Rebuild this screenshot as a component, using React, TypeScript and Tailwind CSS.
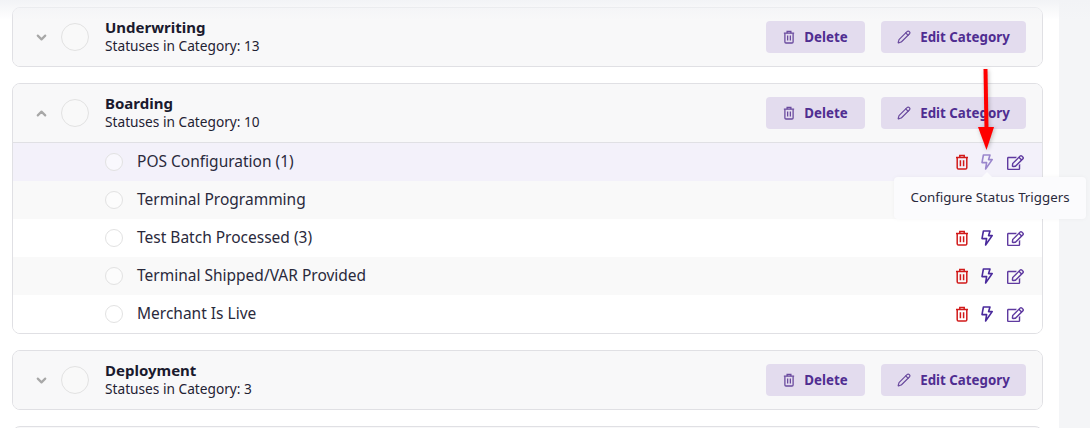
import React from "react";
import { ChevronDown, ChevronUp, Pencil } from "lucide-react";
import { FaRegEdit } from "react-icons/fa";

const statuses = [
  { name: "POS Configuration (1)", bg: "bg-[#f3f1fa]", faded: true },
  { name: "Terminal Programming", bg: "bg-[#f9f9f9]", hidden: true },
  { name: "Test Batch Processed (3)", bg: "bg-white" },
  { name: "Terminal Shipped/VAR Provided", bg: "bg-[#f9f9f9]" },
  { name: "Merchant Is Live", bg: "bg-white" },
];

function TrashIcon({ className }: { className?: string }) {
  return (
    <svg viewBox="0 0 14 16" fill="none" stroke="currentColor" strokeWidth="1.5" className={className}>
      <path d="M1 3.5h12" />
      <path d="M4.8 3.5V1.6h4.4v1.9" />
      <path d="M2.2 3.5v10.2c0 .8.5 1.3 1.3 1.3h7c.8 0 1.3-.5 1.3-1.3V3.5" />
      <path d="M5.4 6.2v6M8.6 6.2v6" />
    </svg>
  );
}

function BoltIcon({ className }: { className?: string }) {
  return (
    <svg viewBox="0 0 12 16" fill="none" stroke="currentColor" strokeWidth="1.6" strokeLinejoin="round" className={className}>
      <path d="M2.4 1h6.6L7.6 5.6h3.6L4.6 15l1-6.4H1z" />
    </svg>
  );
}

function CategoryHeader({ title, count, open }: { title: string; count: number; open?: boolean }) {
  const Chevron = open ? ChevronUp : ChevronDown;
  return (
    <div className="h-[58px] flex items-center bg-[#f8f8f9] pl-[21px] pr-4">
      <Chevron size={15} strokeWidth={3.5} className="text-[#a8a8a8]" />
      <div className="ml-3 w-7 h-7 rounded-full border border-[#e2e2e2] bg-[#f9f9f9]" />
      <div className="ml-4 flex-1 pb-[2px]">
        <p className="text-[15px] leading-[19px] font-bold text-[#1a1a2e]">{title}</p>
        <p className="text-[13.7px] leading-[18px] text-[#1f2233]">Statuses in Category: {count}</p>
      </div>
      <button className="h-8 w-[99px] flex items-center justify-center gap-[9px] rounded bg-[#e3dcee] text-[13.3px] font-bold text-[#4f2d91]">
        <TrashIcon className="w-3 h-[14px] text-[#6a4a9e]" />
        <span className="pt-[2px]">Delete</span>
      </button>
      <button className="ml-4 h-8 w-[145px] flex items-center justify-center gap-[9px] rounded bg-[#e3dcee] text-[13.3px] font-bold text-[#4f2d91]">
        <Pencil size={14} className="text-[#6a4a9e]" />
        <span className="pt-[2px]">Edit Category</span>
      </button>
    </div>
  );
}

export default function App() {
  return (
    <div className="relative h-[428px] overflow-hidden bg-[#f4f5f7] font-['Noto_Sans','Liberation_Sans',sans-serif]">
      <div className="w-[1059px] h-full bg-white pl-3 pr-4 pt-[7px] flex flex-col gap-4">
        <div className="rounded-lg border border-[#e0e0e4] overflow-hidden shrink-0">
          <CategoryHeader title="Underwriting" count={13} />
        </div>

        <div className="rounded-lg border border-[#e0e0e4] overflow-hidden shrink-0">
          <CategoryHeader title="Boarding" count={10} open />
          <div className="border-t border-[#e0e0e4]">
            {statuses.map((s) => (
              <div key={s.name} className={`h-[38px] flex items-center pl-[92px] pr-[18px] ${s.bg}`}>
                <div className="w-[18px] h-[18px] rounded-full border border-[#e2e2e2] bg-white/50" />
                <span className="ml-[14px] flex-1 text-[15.5px] text-[#2a2a3c]">{s.name}</span>
                {!s.hidden && (
                  <div className="flex items-center">
                    <TrashIcon className="w-[14px] h-4 text-[#d11a1a]" />
                    <BoltIcon className={`ml-3 w-3 h-4 ${s.faded ? "text-[#9a86cc]" : "text-[#4a2a9c]"}`} />
                    <FaRegEdit size={17} className="ml-[14px] text-[#5f3aa0]" />
                  </div>
                )}
              </div>
            ))}
          </div>
        </div>

        <div className="rounded-lg border border-[#e0e0e4] overflow-hidden shrink-0">
          <CategoryHeader title="Deployment" count={3} />
        </div>

        <div className="rounded-lg border border-[#e0e0e4] h-10 bg-[#f8f8f9] shrink-0" />
      </div>

      {/* faint shadow from the bar above the crop */}
      <div className="absolute inset-x-0 top-0 h-5 bg-gradient-to-b from-[#f2f3f6] to-transparent" />

      {/* tooltip */}
      <div className="absolute left-[894px] top-[177px] w-[192px] h-[42px] flex items-center justify-center rounded bg-[#fbfbfd] text-[13.3px] text-[#2a2a3c] shadow-[0_0_4px_rgba(0,0,0,0.04)]">
        <div className="absolute -top-[5px] left-[87px] w-0 h-0 border-x-[6px] border-x-transparent border-b-[6px] border-b-[#fbfbfd]" />
        <span className="pb-px">Configure Status Triggers</span>
      </div>

      {/* red annotation arrow */}
      <svg className="absolute left-[970px] top-[64px] drop-shadow-[1px_1px_2px_rgba(0,0,0,0.25)]" width="32" height="90" viewBox="0 0 32 90">
        <path d="M15.5 5 L16.5 65" stroke="#ff0000" strokeWidth="4" fill="none" />
        <path d="M8 63 L24 63 L16.5 86 Z" fill="#ff0000" />
      </svg>
    </div>
  );
}
